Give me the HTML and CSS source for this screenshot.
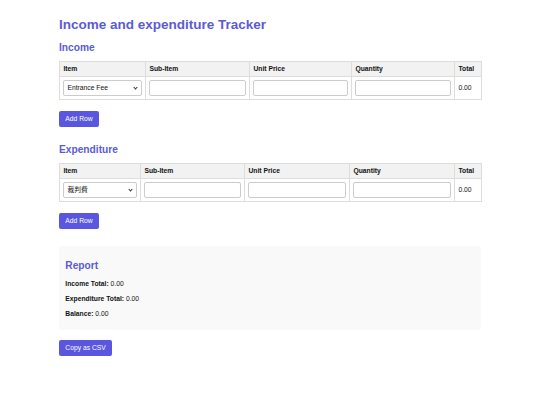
FILE: index.html
```html
<!DOCTYPE html>
<html lang="en">
<head>
  <meta charset="UTF-8" />
  <meta name="viewport" content="width=device-width, initial-scale=1.0"/>
  <title>Income and expenditure Tracker</title>
  <link rel="stylesheet" href="styles.css">
</head>
<body>
  <div class="container">
    <h1>Income and expenditure Tracker</h1>

    <div class="section">
      <h2>Income</h2>
      <table class="income-table" id="income-table">
        <colgroup>
          <col class="c-item"><col class="c-sub"><col class="c-price"><col class="c-qty"><col class="c-total">
        </colgroup>
        <thead>
          <tr>
            <th>Item</th>
            <th>Sub-Item</th>
            <th>Unit Price</th>
            <th>Quantity</th>
            <th>Total</th>
          </tr>
        </thead>
        <tbody>
          <tr>
            <td>
              <span class="select-wrap">
                <select>
                  <option>Entrance Fee</option>
                  <option>Sponsorship</option>
                  <option>Other</option>
                </select>
              </span>
            </td>
            <td><input type="text"></td>
            <td><input type="number"></td>
            <td><input type="number"></td>
            <td class="row-total">0.00</td>
          </tr>
        </tbody>
      </table>
      <button class="btn" onclick="addRow('income-table')">Add Row</button>
    </div>

    <div class="section">
      <h2>Expenditure</h2>
      <table class="expense-table" id="expense-table">
        <colgroup>
          <col class="c-item"><col class="c-sub"><col class="c-price"><col class="c-qty"><col class="c-total">
        </colgroup>
        <thead>
          <tr>
            <th>Item</th>
            <th>Sub-Item</th>
            <th>Unit Price</th>
            <th>Quantity</th>
            <th>Total</th>
          </tr>
        </thead>
        <tbody>
          <tr>
            <td>
              <span class="select-wrap">
                <select>
                  <option>裁判費</option>
                  <option>場地費</option>
                  <option>其他</option>
                </select>
              </span>
            </td>
            <td><input type="text"></td>
            <td><input type="number"></td>
            <td><input type="number"></td>
            <td class="row-total">0.00</td>
          </tr>
        </tbody>
      </table>
      <button class="btn" onclick="addRow('expense-table')">Add Row</button>
    </div>

    <div class="report">
      <h2>Report</h2>
      <p><strong>Income Total:</strong> <span id="income-total">0.00</span></p>
      <p><strong>Expenditure Total:</strong> <span id="expense-total">0.00</span></p>
      <p><strong>Balance:</strong> <span id="balance">0.00</span></p>
    </div>

    <button class="btn copy-btn">Copy as CSV</button>
  </div>

  <script>
    function sumTable(id) {
      let sum = 0;
      document.querySelectorAll('#' + id + ' tbody tr').forEach(row => {
        const inputs = row.querySelectorAll('input[type=number]');
        const total = (parseFloat(inputs[0].value) || 0) * (parseFloat(inputs[1].value) || 0);
        row.querySelector('.row-total').textContent = total.toFixed(2);
        sum += total;
      });
      return sum;
    }

    function updateReport() {
      const income = sumTable('income-table');
      const expense = sumTable('expense-table');
      document.getElementById('income-total').textContent = income.toFixed(2);
      document.getElementById('expense-total').textContent = expense.toFixed(2);
      document.getElementById('balance').textContent = (income - expense).toFixed(2);
    }

    function addRow(id) {
      const body = document.querySelector('#' + id + ' tbody');
      const row = body.rows[0].cloneNode(true);
      row.querySelectorAll('input').forEach(i => i.value = '');
      body.appendChild(row);
      updateReport();
    }

    document.addEventListener('input', updateReport);
  </script>
</body>
</html>
```

FILE: styles.css
```css
body {
  margin: 0;
  padding: 8.4px;
  font-family: "Liberation Sans", Arial, "Noto Sans CJK TC", sans-serif;
  font-size: 6.75px;
  line-height: 7.8px;
  color: #111;
  background: #fff;
}

.container {
  max-width: 422px;
  margin: 0 auto;
}

h1 {
  font-size: 13.5px;
  line-height: 15.5px;
  color: #5b5bd6;
  margin: 9px 0;
}

h2 {
  font-size: 10.2px;
  line-height: 11.7px;
  color: #5b5bd6;
  margin: 0 0 7.4px;
}

.section {
  margin-bottom: 17px;
}

table {
  width: 100%;
  border-collapse: collapse;
  table-layout: fixed;
}

th, td {
  border: 1px solid #ddd;
  padding: 3px 3.4px;
  text-align: left;
}

th {
  background: #f2f2f2;
  font-weight: bold;
}

.income-table .c-item { width: 86px; }
.income-table .c-sub { width: 104px; }
.income-table .c-price { width: 102px; }
.income-table .c-qty { width: 103px; }

.expense-table .c-item { width: 81px; }
.expense-table .c-sub { width: 104px; }
.expense-table .c-price { width: 105px; }
.expense-table .c-qty { width: 105px; }

.c-total { width: 27px; }

input, select {
  display: block;
  width: 100%;
  height: 16px;
  box-sizing: border-box;
  padding: 0 3px;
  font-family: inherit;
  font-size: 6.75px;
  line-height: 14px;
  border: 1px solid #ccc;
  border-radius: 2px;
  background: #fff;
  color: #111;
}

select {
  -webkit-appearance: none;
  appearance: none;
  padding-right: 10px;
}

.select-wrap {
  display: block;
  position: relative;
}

.select-wrap::after {
  content: "";
  position: absolute;
  right: 5px;
  top: 50%;
  width: 2px;
  height: 2px;
  margin-top: -2px;
  border-right: 1px solid #333;
  border-bottom: 1px solid #333;
  transform: rotate(45deg);
  pointer-events: none;
}

.btn {
  display: inline-block;
  height: 16px;
  margin-top: 11px;
  padding: 0 6.3px;
  font-family: inherit;
  font-size: 6.75px;
  line-height: 16px;
  color: #fff;
  background: #5a56e0;
  border: none;
  border-radius: 2px;
  cursor: pointer;
}

.report {
  background: #f9f9f9;
  padding: 6.3px;
  border-radius: 2px;
}

.report h2 {
  margin: 8.4px 0;
}

.report p {
  margin: 6.75px 0;
}

.copy-btn {
  margin-top: 10px;
}
```
